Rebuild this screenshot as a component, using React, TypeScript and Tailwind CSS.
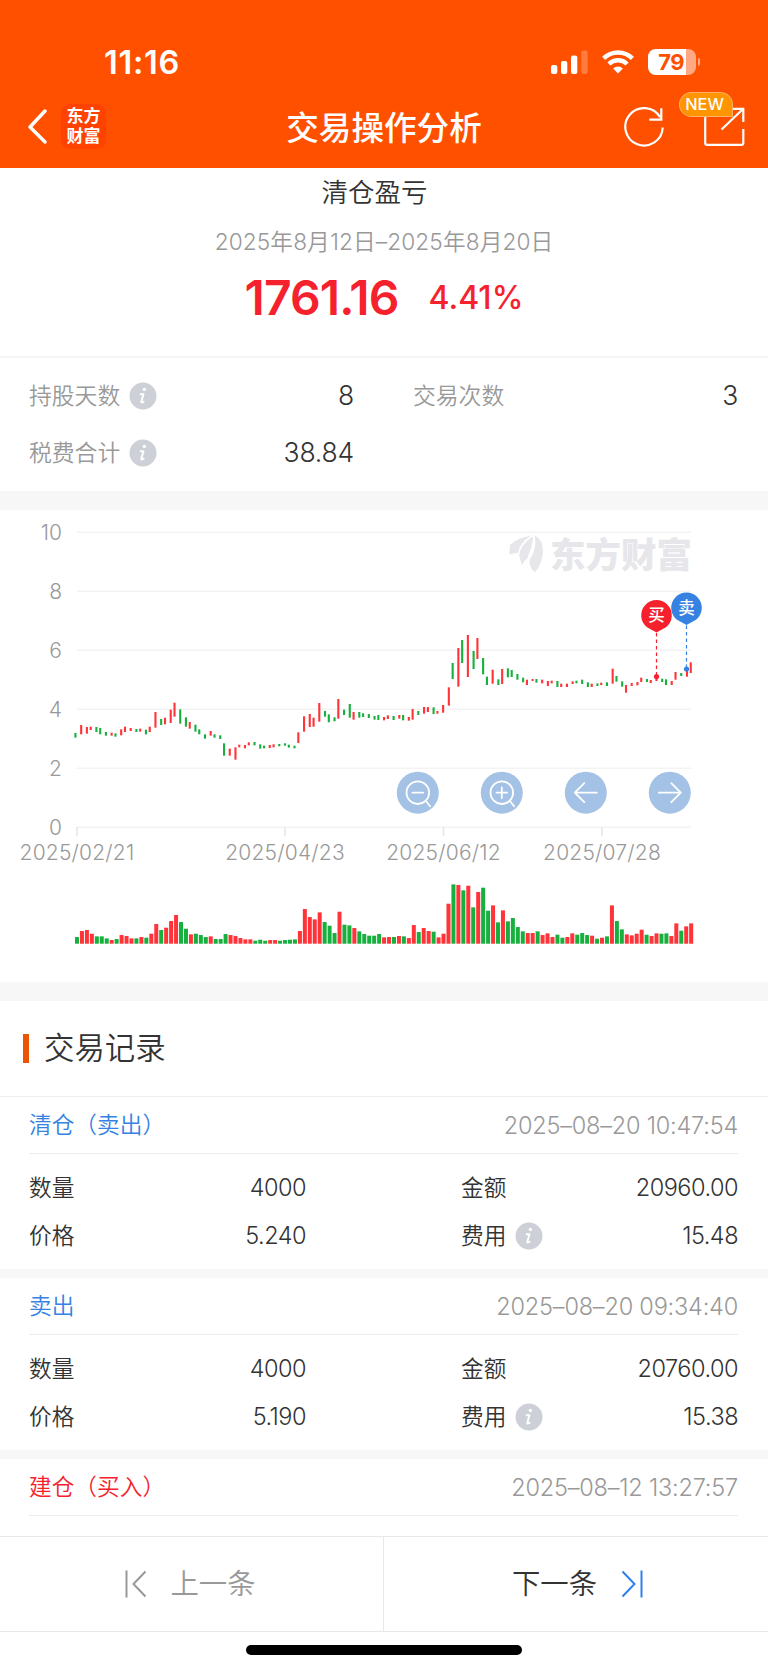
import type { ReactNode } from "react";
import clsx from "clsx";

type Tone = "buy" | "sell";

interface TradeRecord {
  title: string;
  tone: Tone;
  time: string;
  detail?: {
    amount: string;
    price: string;
    total: string;
    fee: string;
  };
}

const records: TradeRecord[] = [
  {
    title: "清仓（卖出）",
    tone: "sell",
    time: "2025–08–20 10:47:54",
    detail: { amount: "4000", price: "5.240", total: "20960.00", fee: "15.48" },
  },
  {
    title: "卖出",
    tone: "sell",
    time: "2025–08–20 09:34:40",
    detail: { amount: "4000", price: "5.190", total: "20760.00", fee: "15.38" },
  },
  {
    title: "建仓（买入）",
    tone: "buy",
    time: "2025–08–12 13:27:57",
  },
];

const RED = "#ff3338";
const GREEN = "#17b03e";

// one letter per day: r = up, g = down
const volumeColors =
  "grrrgggrgrrrgrgrrgrrrggrgggrgggrrrrrgggrrggggrrrrrgggrggrgggggrrgrgrrgrrgrrrgrgrgrggrgrggggrrgrrrggrrgggrgrgrggrrrrgrrggrrgrr";

// bar heights, three units to a pixel
const volumes = [
  20, 38, 41, 30, 22, 22, 16, 11, 14, 26, 23, 16, 16, 20, 18, 30, 59, 41, 48,
  68, 86, 65, 45, 28, 30, 26, 20, 22, 14, 14, 29, 26, 23, 17, 13, 13, 9, 12, 9,
  11, 11, 9, 11, 12, 13, 38, 104, 80, 73, 94, 65, 54, 32, 96, 57, 55, 47, 37,
  29, 24, 24, 29, 19, 20, 20, 23, 22, 17, 56, 35, 47, 38, 36, 19, 30, 120, 178,
  176, 160, 174, 109, 155, 168, 99, 115, 64, 100, 67, 77, 50, 37, 32, 32, 37,
  26, 31, 20, 27, 18, 20, 31, 27, 32, 26, 24, 15, 18, 22, 115, 68, 43, 28, 25,
  30, 42, 27, 23, 31, 30, 31, 23, 61, 39, 52, 61,
];

// [high, low] of every candle, three units to a pixel
const candles: [number, number][] = [
  [339, 353], [315, 343], [321, 341], [320, 330], [321, 336], [324, 343],
  [336, 347], [338, 347], [340, 350], [328, 346], [320, 336], [324, 333],
  [327, 336], [326, 335], [329, 343], [320, 336], [276, 323], [297, 315],
  [293, 313], [269, 309], [248, 290], [268, 311], [292, 320], [306, 326],
  [314, 335], [328, 343], [343, 356], [333, 347], [343, 353], [346, 357],
  [370, 407], [386, 407], [382, 419], [374, 382], [375, 385], [367, 376],
  [366, 376], [373, 386], [377, 385], [375, 384], [373, 382], [372, 379],
  [370, 377], [374, 383], [377, 385], [337, 369], [289, 335], [282, 321],
  [293, 320], [249, 305], [273, 290], [283, 307], [292, 304], [237, 296],
  [269, 285], [252, 293], [276, 299], [276, 293], [280, 291], [282, 294],
  [288, 299], [285, 300], [291, 301], [286, 297], [288, 300], [285, 296],
  [285, 301], [291, 302], [267, 299], [273, 285], [261, 281], [261, 276],
  [262, 282], [273, 281], [255, 278], [202, 257], [129, 177], [84, 200],
  [60, 129], [45, 171], [93, 147], [54, 117], [114, 163], [170, 195],
  [149, 191], [178, 195], [147, 192], [145, 172], [150, 171], [162, 179],
  [173, 187], [179, 195], [177, 183], [177, 188], [179, 190], [183, 198],
  [182, 190], [183, 201], [191, 201], [191, 201], [184, 192], [182, 190],
  [179, 192], [187, 201], [191, 201], [190, 198], [188, 195], [187, 198],
  [146, 191], [168, 185], [184, 200], [195, 218], [189, 198], [186, 196],
  [173, 186], [177, 186], [180, 189], [165, 183], [176, 186], [178, 195],
  [183, 195], [156, 179], [159, 168], [153, 170], [127, 159],
];

const yLabels = [10, 8, 6, 4, 2, 0];
const xLabels = [
  { x: 77, text: "2025/02/21" },
  { x: 285, text: "2025/04/23" },
  { x: 443.5, text: "2025/06/12" },
  { x: 602, text: "2025/07/28" },
];

const InfoIcon = () => (
  <svg width="28" height="28" viewBox="0 0 28 28" className="ml-[9px] shrink-0">
    <circle cx="14" cy="14" r="13.5" fill="#cdd0d6" />
    <circle cx="15.4" cy="7.4" r="1.7" fill="#fff" />
    <path
      d="M11.6 12.2h2.9l-2.2 7.6c-.2 1 .4 1.200 2.300 0"
      fill="none"
      stroke="#fff"
      strokeWidth="1.9"
      strokeLinecap="round"
      strokeLinejoin="round"
    />
  </svg>
);

const StatusBar = () => (
  <div className="flex h-[84px] items-end justify-between pr-[68px] pb-[8px] pl-[104px]">
    <span className="font-['Inter'] text-[32.5px] leading-[26px] font-semibold tracking-[0.7px]">
      11:16
    </span>
    <div className="flex h-[28px] items-center">
      <svg width="38" height="24" viewBox="0 0 38 24" fill="#fff">
        <rect x="0" y="15" width="6.3" height="9" rx="2" />
        <rect x="10" y="11" width="6.3" height="13" rx="2" />
        <rect x="20" y="5.5" width="6.3" height="18.5" rx="2" />
        <rect x="30.3" y="0.5" width="6.3" height="23.5" rx="2" opacity="0.25" />
      </svg>
      <svg width="32" height="24" viewBox="0 0 32 24" className="ml-[13px]" fill="none" stroke="#fff" strokeWidth="4.4">
        <path d="M1.6 8.4a20.5 20.5 0 0 1 28.8 0" />
        <path d="M6.9 14a13 13 0 0 1 18.2 0" />
        <path d="M16 23.4l-4.9-4.9a7 7 0 0 1 9.8 0z" fill="#fff" stroke="none" />
      </svg>
      <div className="ml-[14px] flex items-center">
        <div className="flex h-[26px] w-[48px] overflow-hidden rounded-[8px] bg-[#ffa884]">
          <div className="flex w-[38px] items-center justify-end bg-white pr-[2px] font-['Inter'] text-[22px] font-bold tracking-[-0.5px] text-[#ff5000]">
            79
          </div>
        </div>
        <div className="ml-[2px] h-[8px] w-[2px] rounded-r-full bg-[#ffa884]" />
      </div>
    </div>
  </div>
);

const NavBar = () => (
  <div className="relative flex h-[84px] items-center justify-between pr-[23px] pl-[26px]">
    <div className="flex items-center">
      <svg width="24" height="36" viewBox="0 0 24 36" fill="none" stroke="#fff" strokeWidth="3.4" strokeLinecap="round" strokeLinejoin="round">
        <path d="M19 3L4 19L19 34" />
      </svg>
      <div className="ml-[11px] grid h-[45px] w-[45px] grid-cols-2 content-center justify-center rounded-[9px] bg-[#ff4200] px-[5.5px] pt-[1px] text-center text-[17px] leading-[19.5px] font-bold">
        <span>东</span>
        <span>方</span>
        <span>财</span>
        <span>富</span>
      </div>
    </div>
    <h1 className="absolute inset-x-0 pt-[4px] text-center text-[32.6px] font-medium">
      交易操作分析
    </h1>
    <div className="flex items-center pt-[2px]">
      <svg width="42" height="42" viewBox="0 0 42 42" fill="none" stroke="#fff" strokeWidth="2.2">
        <path d="M39.7 21.5a18.7 18.7 0 1 1-2.6-10.2" />
        <path d="M38.3 2.2v11.5H26.3" />
      </svg>
      <div className="relative ml-[38px]">
        <svg width="42" height="42" viewBox="0 0 42 42" fill="none" stroke="#fff" strokeWidth="2.2">
          <path d="M10 3H4q-1.8 0-1.8 1.8V37q0 1.8 1.8 1.8h34.500q1.800 0 1.800-1.800V23" />
          <path d="M28 2.800h12.300V16M40 3L18.500 23.500" />
        </svg>
        <div className="absolute -top-[14px] -left-[24.500px] flex h-[25px] w-[54px] items-center justify-center rounded-full rounded-br-[6px] border border-[#ffb060] bg-[#ff9500] pr-[2px] font-['Inter'] text-[16.400px] font-medium">
          NEW
        </div>
      </div>
    </div>
  </div>
);

const Stat = ({ label, value, info }: { label: string; value: string; info?: boolean }) => (
  <div className="flex h-[57.500px] items-center">
    <span className="text-[22.800px] text-[#999]">{label}</span>
    {info && <InfoIcon />}
    <span className="ml-auto font-['Inter'] text-[26.500px] tracking-[-0.200px] text-[#333]">
      {value}
    </span>
  </div>
);

const Pin = ({ x, y, dotY, color, label }: { x: number; y: number; dotY: number; color: string; label: string }) => (
  <g>
    <line x1={x} x2={x} y1={y + 18} y2={dotY} stroke={color} strokeDasharray="3.500 3" strokeWidth="1.200" />
    <circle cx={x} cy={dotY} r="2.600" fill={color} />
    <path
      d={`M${x} ${y + 17.5}l-9.500-5.200a15.300 15.300 0 1 1 19 0z`}
      fill={color}
    />
    <text x={x} y={y + 6} fontSize="16.500" fontWeight="500" fill="#fff" textAnchor="middle">
      {label}
    </text>
  </g>
);

const RoundButton = ({ x, children }: { x: number; children: ReactNode }) => (
  <g transform={`translate(${x} 282.700)`}>
    <circle r="21" fill="#a4c2e5" />
    <g fill="none" stroke="#fff" strokeWidth="1.800" strokeLinecap="round" strokeLinejoin="round">
      {children}
    </g>
  </g>
);

const Chart = () => (
  <svg width="768" height="472" viewBox="0 0 768 472" className="block">
    {yLabels.map((label, i) => (
      <g key={label}>
        <line x1="77" x2="691" y1={22.3 + i * 59} y2={22.3 + i * 59} stroke="#f3f3f4" strokeWidth="1.600" />
        <text x="62" y={29.5 + i * 59} textAnchor="end" fontSize="21" fill="#999" className="font-['Inter']">
          {label}
        </text>
      </g>
    ))}
    {xLabels.map(({ x, text }) => (
      <g key={text}>
        <line x1={x} x2={x} y1="317" y2="326" stroke="#e6e6e6" strokeWidth="1.600" />
        <text x={x} y="350.300" textAnchor="middle" fontSize="21" letterSpacing="0.200" fill="#999" className="font-['Inter']">
          {text}
        </text>
      </g>
    ))}

    <g fill="#e6e6eb">
      <g transform="translate(490 10) scale(0.3333)">
        <path d="M123 47Q85 52 60 74L58 104Q72 98 84 99Q90 66 123 47z" />
        <path d="M126 52Q94 72 87 105Q93 122 95 136Q100 125 113 113Q126 82 130 50z" />
        <path d="M134 45Q161 62 159 95Q156 132 135 157Q120 145 118 126Q118 115 127 106Q141 76 134 45z" />
      </g>
      <text x="550" y="57.500" fontSize="35.500" fontWeight="900">
        东方财富
      </text>
    </g>

    {candles.map(([high, low], i) => {
      // day 98 closed up on falling volume
      const up = volumeColors[i] === "r" || i === 98;
      return (
        <rect
          key={i}
          x={74.4 + Math.round(i * 2.604 + 0.3) * 1.905}
          y={110 + high / 3}
          width="2.100"
          height={(low - high) / 3}
          fill={up ? RED : GREEN}
        />
      );
    })}
    {volumes.map((volume, i) => (
      <rect
        key={i}
        x={75 + i * 4.953}
        y={433.7 - volume / 3}
        width="4"
        height={volume / 3}
        fill={volumeColors[i] === "r" ? RED : GREEN}
      />
    ))}

    <Pin x={656.5} y={105} dotY={166.5} color="#f5222d" label="买" />
    <Pin x={686.5} y={97.5} dotY={159} color="#3682e2" label="卖" />

    <RoundButton x={417.8}>
      <circle r="11.300" />
      <path d="M-5.300 0H5.300M8 8l4.300 5.500" />
    </RoundButton>
    <RoundButton x={501.8}>
      <circle r="11.300" />
      <path d="M-5.300 0H5.300M0-5.300V5.300M8 8l4.300 5.500" />
    </RoundButton>
    <RoundButton x={585.8}>
      <path d="M11 0H-11M-1.500-9.500L-11 0l9.500 9.500" />
    </RoundButton>
    <RoundButton x={669.8}>
      <path d="M-11 0H11M1.500-9.500L11 0l-9.500 9.500" />
    </RoundButton>
  </svg>
);

const Field = ({ label, value, info }: { label: string; value: string; info?: boolean }) => (
  <div className="flex h-[48px] items-center">
    <span>{label}</span>
    {info && <InfoIcon />}
    <span className="ml-auto font-['Inter'] text-[23.500px] tracking-[-0.500px]">{value}</span>
  </div>
);

const Record = ({ record }: { record: TradeRecord }) => (
  <div className="shrink-0 pr-[30px] pl-[29px] text-[22.700px] text-[#333]">
    <div className="flex h-[57px] items-center justify-between border-b border-[#ededed] pt-[1px]">
      <span className={clsx(record.tone === "sell" ? "text-[#3682e2]" : "text-[#f5222d]")}>
        {record.title}
      </span>
      <span className="font-['Inter'] text-[23.500px] tracking-[-0.200px] text-[#999]">
        {record.time}
      </span>
    </div>
    {record.detail && (
      <div className="grid h-[115px] grid-cols-[277px_277px] content-start justify-between pt-[10px]">
        <Field label="数量" value={record.detail.amount} />
        <Field label="金额" value={record.detail.total} />
        <Field label="价格" value={record.detail.price} />
        <Field label="费用" value={record.detail.fee} info />
      </div>
    )}
  </div>
);

export default function App() {
  return (
    <div className="flex h-[1670px] w-[768px] flex-col overflow-hidden bg-white font-['Inter','Noto_Sans_CJK_SC',sans-serif] font-[350]">
      <header className="h-[168px] shrink-0 bg-[#ff5000] text-white">
        <StatusBar />
        <NavBar />
      </header>

      <section className="flex h-[190px] shrink-0 flex-col items-center border-b-2 border-[#f5f5f5]">
        <div className="mt-[5px] pr-[19px] text-[26.500px] leading-[38px] text-[#333]">清仓盈亏</div>
        <div className="mt-[15px] text-[22.700px] leading-[32px] tracking-[0.100px] text-[#999]">
          2025年8月12日–2025年8月20日
        </div>
        <div className="mt-[10px] flex items-center font-['Inter'] leading-[60px] text-[#f5222d]">
          <span className="text-[48px] font-semibold tracking-[-0.900px]">1761.16</span>
          <span className="ml-[30px] text-[32px] font-medium">4.41%</span>
        </div>
      </section>

      <section className="grid h-[133px] shrink-0 grid-cols-[325px_325px] content-start justify-between pt-[9px] pr-[30px] pl-[29px]">
        <Stat label="持股天数" value="8" info />
        <Stat label="交易次数" value="3" />
        <Stat label="税费合计" value="38.84" info />
      </section>

      <section className="shrink-0 border-y-[19px] border-[#f7f7f7]">
        <Chart />
      </section>

      <section className="flex min-h-0 flex-1 flex-col overflow-hidden">
        <div className="flex h-[96px] shrink-0 items-center border-b border-[#ededed] pl-[23px]">
          <div className="h-[29px] w-[6px] bg-[#ea5504]" />
          <h2 className="ml-[15px] pt-[1px] text-[30.400px] text-[#333]">交易记录</h2>
        </div>
        <div className="flex flex-col divide-y-[9.500px] divide-[#f7f7f7]">
          {records.map((record) => (
            <Record key={record.time} record={record} />
          ))}
        </div>
      </section>

      <footer className="h-[134px] shrink-0 bg-white">
        <div className="grid h-[96px] grid-cols-2 border-y border-[#e8e8e8] text-[28.400px]">
          <button className="flex items-center justify-center gap-[23px] border-r border-[#e8e8e8] pr-[2px] text-[#999]">
            <svg width="22" height="28" viewBox="0 0 22 28" fill="none" stroke="#999" strokeWidth="2">
              <path d="M1.500 0.500V27.500M20.500 1.500L8.500 14l12 12.500" />
            </svg>
            <span className="pt-[1px]">上一条</span>
          </button>
          <button className="flex items-center justify-center gap-[24px] pl-[3px] text-[#333]">
            <span className="pt-[1px]">下一条</span>
            <svg width="22" height="28" viewBox="0 0 22 28" fill="none" stroke="#2f80ed" strokeWidth="2">
              <path d="M20.500 0.500V27.500M1.500 1.500l12 12.500L1.500 26.500" />
            </svg>
          </button>
        </div>
        <div className="mx-auto mt-[13px] h-[10px] w-[276px] rounded-full bg-black" />
      </footer>
    </div>
  );
}
